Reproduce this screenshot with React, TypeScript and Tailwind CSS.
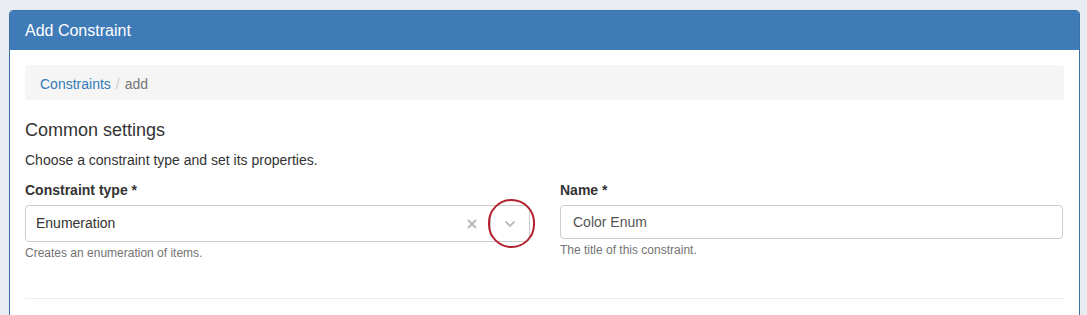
import React from "react";

export default function App() {
  return (
    <div
      className="w-[1087px] h-[315px] bg-[#e9edf1] overflow-hidden pt-[10px] pl-[9px] pr-[7px]"
      style={{ fontFamily: '"Liberation Sans", Arial, sans-serif' }}
    >
      <div className="w-[1071px] h-[320px] border border-[#3a71a6] rounded-t-[4px] bg-white">
        <div className="h-[39px] bg-[#3e7bb7] text-white text-[16px] px-[15px] flex items-center rounded-t-[3px]">
          Add Constraint
        </div>
        <div className="px-[15px] pt-[15px]">
          <div className="h-[35px] bg-[#f5f5f5] rounded-[4px] px-[15px] pt-[3px] flex items-center text-[14px]">
            <span className="text-[#337ab7]">Constraints</span>
            <span className="text-[#cccccc] px-[5px]">/</span>
            <span className="text-[#777777]">add</span>
          </div>
          <div className="text-[18px] text-[#333] mt-[19px] leading-[22px]">Common settings</div>
          <div className="text-[14px] text-[#333] mt-[9px] leading-[20px]">
            Choose a constraint type and set its properties.
          </div>
          <div className="flex gap-[30px] mt-[10px]">
            <div className="w-[505px]">
              <div className="text-[14px] font-bold text-[#333] leading-[20px]">Constraint type *</div>
              <div className="relative mt-[5px] h-[37px] border border-[#cccccc] rounded-[4px] flex items-center">
                <span className="flex-1 pl-[10px] text-[14px] text-[#333]">Enumeration</span>
                <span className="w-[36px] flex items-center justify-center">
                  <svg width="10" height="10" viewBox="0 0 10 10">
                    <path d="M1 1 L9 9 M9 1 L1 9" stroke="#b8b8b8" strokeWidth="1.8" />
                  </svg>
                </span>
                <span className="h-[24px] w-px bg-[#cccccc]" />
                <span className="w-[38px] flex items-center justify-center">
                  <svg width="12" height="8" viewBox="0 0 12 8">
                    <path d="M1.5 1.5 L6 6 L10.5 1.5" stroke="#bbbbbb" strokeWidth="1.8" fill="none" />
                  </svg>
                </span>
                <div className="absolute left-[462px] top-[-7px] w-[47px] h-[49px] rounded-full border-[2.5px] border-[#b3202e]" />
              </div>
              <div className="text-[12px] text-[#737373] mt-[3px] leading-[17px]">
                Creates an enumeration of items.
              </div>
            </div>
            <div className="w-[503px]">
              <div className="text-[14px] font-bold text-[#333] leading-[20px]">Name *</div>
              <div className="mt-[5px] h-[34px] border border-[#cccccc] rounded-[4px] flex items-center pl-[12px] text-[14px] text-[#555]">
                Color Enum
              </div>
              <div className="text-[12px] text-[#737373] mt-[3px] leading-[17px]">
                The title of this constraint.
              </div>
            </div>
          </div>
          <div className="mt-[36px] h-px bg-[#eeeeee]" />
        </div>
      </div>
    </div>
  );
}
